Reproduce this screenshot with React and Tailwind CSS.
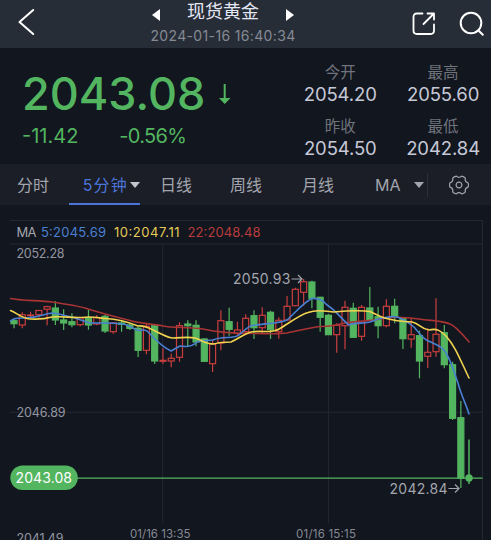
import React from "react";

// [up, high, bodyTop, bodyBottom, low], vertical positions in chart units
const candles = [
    [0, 319, 320.7, 323.7, 328.3], [1, 312.3, 314.7, 325, 328.3], [1, 311.7, 315, 315.6, 318.3],
    [1, 310, 310.5, 314.7, 317.7], [1, 305.7, 306.7, 309.3, 325.3], [0, 301.3, 308, 320, 325],
    [0, 309.3, 320, 323, 330], [0, 313.3, 321.7, 324.7, 327.3], [1, 317.3, 317.7, 324.7, 326.3],
    [0, 310, 317.7, 325, 329.7], [1, 315, 317.7, 324, 325.3], [0, 315, 316.3, 331, 333],
    [1, 322.3, 323, 331.7, 333.7], [0, 320, 323, 324.3, 331.7], [0, 323.3, 325, 328.3, 330],
    [0, 327, 328.3, 350.3, 357], [1, 323, 326.3, 350.3, 354.3], [0, 324.3, 325, 361, 364],
    [1, 348.3, 360.3, 361.3, 363.7], [1, 353.7, 358.3, 361, 367.3], [1, 322.3, 325.7, 357.3, 361.7],
    [0, 320.3, 324, 325.7, 346.7], [0, 320.3, 325.3, 342, 346.3], [0, 338.3, 339, 361.3, 362],
    [1, 339.7, 343.7, 363.7, 372], [1, 310.3, 320.7, 343, 350.3], [0, 307.7, 321.7, 329.3, 335.7],
    [1, 321.7, 330, 333.3, 335], [1, 314.3, 318.3, 331.7, 333.3], [0, 310.3, 315.7, 327.7, 339],
    [1, 307.3, 315.3, 327.7, 333.3], [0, 310.7, 312.3, 329.3, 339], [1, 317.3, 320.3, 331.7, 338.7],
    [1, 296, 306.3, 320, 320], [1, 287.7, 289.3, 305.7, 306.3], [1, 279, 281.7, 292.3, 305.7],
    [0, 280.7, 282, 298.3, 308.3], [0, 296.7, 297.3, 317.3, 331.7], [0, 314, 315.3, 334.7, 335],
    [1, 323.3, 325.3, 334.7, 352.7], [1, 300.7, 307.3, 325.7, 349.3], [0, 302.7, 308.3, 337.3, 337.3],
    [1, 305, 307.3, 336.3, 340.7], [0, 287, 308, 320, 320], [0, 306.7, 316.7, 325.7, 338.3],
    [1, 299.3, 306.3, 325.7, 327.3], [0, 298.7, 306.3, 316.7, 323.3], [0, 317.3, 318.3, 338.7, 349],
    [1, 318.3, 334.7, 339, 347.7], [0, 330.7, 335.7, 361, 378.3], [1, 328.3, 352.3, 356.3, 368],
    [1, 298.3, 334.3, 351.7, 356.7], [0, 325, 332.7, 364.7, 368.3], [0, 361.7, 364.7, 418.3, 420],
    [0, 401, 417.7, 478.3, 488],
];

const red = "#c93f3e";
const green = "#53b55f";

const quotes = [
    ["今开", "2054.20"],
    ["最高", "2055.60"],
    ["昨收", "2054.50"],
    ["最低", "2042.84"],
];

function Header() {
    return (
        <header className="flex h-12 bg-[#272d37] pl-[17px] pr-[6px]">
            <svg className="mt-[7px]" width="20" height="30" fill="none" stroke="#fff" strokeWidth="2" strokeLinecap="round" strokeLinejoin="round">
                <path d="M16.2 3 2.5 15l13.7 12" />
            </svg>
            <div className="ml-[113px] flex w-[146px] flex-col items-center">
                <div className="flex h-[26px] items-center gap-[27px]">
                    <svg className="mt-[3px]" width="8" height="12" fill="#fff"><path d="M8 0v12L0 6z" /></svg>
                    <h1 className="-mt-[2px] whitespace-nowrap text-[18px] leading-6 text-[#e4e7f5]">现货黄金</h1>
                    <svg className="mt-[3px]" width="8" height="12" fill="#fff"><path d="M0 0v12l8-6z" /></svg>
                </div>
                <p className="whitespace-nowrap text-[14px] leading-[19px] tracking-[0.35px] text-[#858993]">2024-01-16 16:40:34</p>
            </div>
            <div className="ml-auto flex gap-[21px] pt-[10px]">
                <svg width="26" height="28" fill="none" stroke="#fff" strokeWidth="1.800" strokeLinecap="round" strokeLinejoin="round">
                    <path d="M10.500 3.500H5Q1.500 3.500 1.500 7V20.500Q1.500 24 5 24H18.500Q22 24 22 20.500V14.500" />
                    <path d="M15.500 3.500H22V9.500M22 3.500 11.500 14" />
                </svg>
                <svg width="26" height="28" fill="none" stroke="#fff" strokeWidth="2" strokeLinecap="round">
                    <circle cx="12" cy="13" r="10.300" />
                    <path d="m19.500 20.500 4.300 4.300" />
                </svg>
            </div>
        </header>
    );
}

function Summary() {
    return (
        <section className="flex h-[116px] justify-between pl-[22px] pr-[11px]">
            <div className="pt-[19px] text-[#53b55f]">
                <div className="flex items-center gap-[13px]">
                    <span className="text-[45px] font-medium leading-[54px]">2043.08</span>
                    <svg width="14" height="22" fill={green}>
                        <path d="M5.700 1h2v14h4.800L6.700 21 1 15h4.700z" />
                    </svg>
                </div>
                <div className="mt-[3px] flex gap-[41px] text-[20px] leading-6">
                    <span>-11.42</span>
                    <span className="tracking-[-0.7px]">-0.56%</span>
                </div>
            </div>
            <div className="grid h-[108px] grid-cols-2 gap-x-[29px] pt-[14px]">
                {quotes.map(([label, value]) => (
                    <div key={label} className="flex h-[54px] flex-col items-center">
                        <span className="text-[15.5px] leading-[21px] text-[#6f737c]">{label}</span>
                        <span className="text-[18.5px] leading-[22px] tracking-[-0.1px] text-[#c5c8d6]">{value}</span>
                    </div>
                ))}
            </div>
        </section>
    );
}

function Caret() {
    return <svg width="10" height="6" fill="currentColor"><path d="M0 0h10L5 6z" /></svg>;
}

function Tabs() {
    return (
        <nav className="flex h-[41px] items-center bg-[#1b1e27] pl-[17px] text-[16px] text-[#a2a5ad]">
            <span className="w-[52px]">分时</span>
            <span className="flex h-full w-[71px] items-center justify-end gap-[2px] border-b-2 border-[#4b74d9] pt-[2px] text-[#4b74d9]">
                <span className="whitespace-nowrap tracking-[1.200px]">5分钟</span>
                <span className="text-[#c4c6cc]"><Caret /></span>
            </span>
            <span className="ml-5 w-[70px]">日线</span>
            <span className="w-[72px]">周线</span>
            <span className="w-[73px]">月线</span>
            <span className="w-[39px]">MA</span>
            <Caret />
            <span className="ml-[3px] h-6 w-px bg-[#2b2f38]" />
            <svg className="ml-[21px]" width="20" height="20" viewBox="-10 -10 20 20" fill="none" stroke="currentColor" strokeWidth="1.200" strokeLinejoin="round">
                <path d="M9.060-2.090Q9.800 0 9.060 2.090Q5.460 3.150 6.340 6.800Q4.900 8.490 2.720 8.890Q0 6.300-2.720 8.890Q-4.900 8.490-6.340 6.800Q-5.460 3.150-9.060 2.090Q-9.800 0-9.060-2.090Q-5.460-3.150-6.340-6.800Q-4.900-8.490-2.720-8.890Q0-6.300 2.720-8.890Q4.900-8.490 6.340-6.800Q5.460-3.150 9.060-2.090Z" />
                <circle r="2.900" />
            </svg>
        </nav>
    );
}

function Chart() {
    return (
        <svg className="block" width="491" height="320" viewBox="0 220 491 320">
            <g stroke="#242832" fill="none">
                <path d="M10 220.500H482.500V540M10 244H482.500M10 412.300H482.500M162.700 244V523M328.400 244V523" />
            </g>
            {candles.map(([up, high, top, bottom, low], i) => {
                const x = 14 + i * 8.275;
                const color = up ? red : green;
                return (
                    <g key={i} stroke={color} strokeWidth="1.200">
                        <path d={`M${x} ${high}V${top}M${x} ${bottom}V${low}`} />
                        <rect x={x - 3} y={top} width="6" height={Math.max(bottom - top, 0.5)} fill={up ? "none" : green} />
                    </g>
                );
            })}
            <g fill="none" strokeWidth="1.600" strokeLinejoin="round" strokeLinecap="round">
                <path stroke="#a93434" d="M10.500 298.500C20 300.500 38 300.500 52 302C65 304 80 306 88 309C104 314 120 318 130 320.500C137 323 150 323.500 163 326C172 328 190 327 203 329C220 333 235 333.500 254 333.500C265 333.500 277 334.500 287 333C297 331 310 327.500 320 326.500C330 327 335 325.500 345 323C357 321 372 321 380 319C393 316 405 317 419 319C431 321 441 320 450 324C456 326 463 335 469 342" />
                <path stroke="#4a80d2" d="M10.500 321C13 317.500 19 318 25 318C37 318 42 315 49 313.500C56 312 61 315 67 316C77 318 82 321 90 323C101 323 110 322.500 122 324C130 324 134 331 140 330.500C148 328 150 335 155 339C160 344 165 348 171 351L180 346C186 347 193 346 197 342C204 340 208 341 213 340C221 336 235 339 239 335C248 327 250 325 257 325C267 323 277 324 287 320C295 313 304 302 312 298.500C317 298 322 299 327 305C338 312 342 320 349 325C355 322 362 324 370 322C382 317 393 316 397 317C404 319 409 323 414 327C421 335 425 341 431 342C438 346 442 346 446 353C452 363 455 375 458 383C461 395 466 404 469 414" />
                <path stroke="#f0d34f" d="M10.500 310.500C17 313 21 318 30 319C39 319.500 45 319 52 317C64 316 70 318 82 317.500C92 316 99 318 106 318.500C116 319 128 322 138 326C145 325 149 328 155 331C164 335 168 338 173 338C181 338 187 336.500 195 338C202 340 205 344 214 344C220 342 224 342 231 342C238 339 244 334 251 332C262 330 272 334 280 328.500C288 324 299 315 308 312.500C317 309 325 311 333 312C345 311 360 310 370 311.500C378 315 382 318 391 319.500C400 322 405 321 412 322C419 323 421 329 429 330C437 328 441 331 446 336C455 346 459 357 469 378" />
            </g>
            <path d="M77 478.200H482.500" stroke={green} strokeWidth="1.200" />
            <path d="M469 439.500V484" stroke={green} strokeWidth="1.500" />
            <circle cx="469" cy="478" r="3.700" fill={green} />
            <rect x="10.300" y="465.500" width="67.500" height="24.500" rx="12.250" fill={green} />
            <text x="15.500" y="483" fontSize="14" textLength="56.500" fill="#fff">2043.08</text>
            <g fontSize="13">
                <text x="16.500" y="236.500" textLength="20" fill="#a2a5ad">MA</text>
                <text x="41" y="236.500" textLength="65" fill="#4a80d2">5:2045.69</text>
                <text x="114" y="236.500" textLength="65.500" fill="#e5ca55">10:2047.11</text>
                <text x="187.500" y="236.500" textLength="73" fill="#b93c3b">22:2048.48</text>
            </g>
            <g fontSize="12.500" fill="#9295a0">
                <text x="16.500" y="258" textLength="48">2052.28</text>
                <text x="16.500" y="417" textLength="49">2046.89</text>
                <text x="16.500" y="543" textLength="47">2041.49</text>
            </g>
            <g fontSize="11.500" fill="#858993">
                <text x="130" y="537.500" textLength="60.500">01/16 13:35</text>
                <text x="296" y="537.500" textLength="60">01/16 15:15</text>
            </g>
            <g fontSize="14" fill="#a2a5ad">
                <text x="233" y="284" textLength="57.500">2050.93</text>
                <text x="389.500" y="493.500" textLength="58">2042.84</text>
            </g>
            <path d="M291.500 279H302M298 275l4 4-4 4M448.500 488.500H459M455 484.500l4 4-4 4" fill="none" stroke="#a2a5ad" strokeWidth="1.200" />
        </svg>
    );
}

function App() {
    return (
        <main className="h-[540px] w-[491px] overflow-hidden bg-[#12161f] font-['Inter','Noto_Sans_CJK_SC',sans-serif]">
            <Header />
            <Summary />
            <Tabs />
            <div className="pt-[15px]">
                <Chart />
            </div>
        </main>
    );
}

export default App;
